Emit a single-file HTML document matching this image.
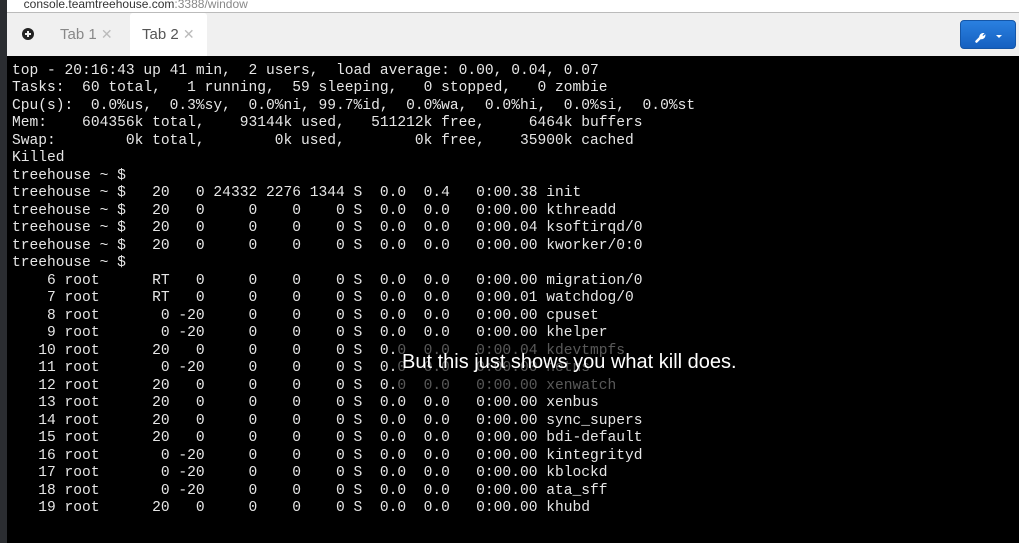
<!DOCTYPE html>
<html><head><meta charset="utf-8"><style>
*{margin:0;padding:0;box-sizing:border-box}
body{width:1019px;height:543px;overflow:hidden;background:#000;position:relative;font-family:"Liberation Sans",sans-serif}
#left{position:absolute;left:0;top:0;width:7px;height:543px;background:#2b2d31}
#url{position:absolute;left:7px;top:0;width:1012px;height:13px;background:#fff;border-bottom:1px solid #bbb;font-size:12px;color:#333;line-height:9px;overflow:hidden}
#url span{color:#888}
#tabs{position:absolute;left:7px;top:13px;width:1012px;height:43px;background:#f0f0f0}
.tab{position:absolute;top:0;height:43px;font-size:15px;color:#888;line-height:43px}
#tab2{left:123px;width:77px;background:#fff;color:#555;padding-left:12px;border-radius:3px 3px 0 0}
.x{color:#bbb;font-size:14px}
#plus{position:absolute;left:15px;top:15px;width:12px;height:12px;border-radius:50%;background:#222}
#plus:before{content:"";position:absolute;left:3px;top:5px;width:6px;height:2px;background:#f0f0f0}
#plus:after{content:"";position:absolute;left:5px;top:3px;width:2px;height:6px;background:#f0f0f0}
#btn{position:absolute;left:953px;top:7px;width:56px;height:29px;border-radius:4px;background:linear-gradient(#2a80e0,#1560c0);border:1px solid #1456a8}
#term{position:absolute;left:12px;top:63px;font-family:"Liberation Mono",monospace;font-size:14.6px;line-height:17.48px;color:#e6e6e6;white-space:pre}
#dim{position:absolute;left:398px;top:342px;width:348px;height:50px;background:rgba(0,0,0,0.62)}
#sub{position:absolute;left:402px;top:351px;font-size:20px;color:#fff;letter-spacing:0;white-space:nowrap}
</style></head><body>
<div id="left"></div>
<div id="url">&nbsp;&nbsp;&nbsp;&nbsp;&nbsp;console.teamtreehouse.com<span>:3388/window</span></div>
<div id="tabs">
<div id="plus"></div>
<div class="tab" style="left:53px">Tab 1 <span class="x">✕</span></div>
<div class="tab" id="tab2">Tab 2 <span class="x">✕</span></div>
<div id="btn"><svg width="56" height="29" viewBox="0 0 56 29"><path d="M15.5 20.5 L20 16" stroke="#fff" stroke-width="2.6" fill="none" stroke-linecap="round"/><path d="M19 17.5 a3.6 3.6 0 0 1 3.5 -5 l-1.6 1.8 1.2 1.4 1.8 -1.4 a3.6 3.6 0 0 1 -4.9 3.2z" fill="#fff" stroke="#fff" stroke-width="1"/><path d="M35 14 h6 l-3 3z" fill="#fff"/></svg></div>
</div>
<div id="term">top - 20:16:43 up 41 min,  2 users,  load average: 0.00, 0.04, 0.07
Tasks:  60 total,   1 running,  59 sleeping,   0 stopped,   0 zombie
Cpu(s):  0.0%us,  0.3%sy,  0.0%ni, 99.7%id,  0.0%wa,  0.0%hi,  0.0%si,  0.0%st
Mem:    604356k total,    93144k used,   511212k free,     6464k buffers
Swap:        0k total,        0k used,        0k free,    35900k cached
Killed
treehouse ~ $
treehouse ~ $   20   0 24332 2276 1344 S  0.0  0.4   0:00.38 init
treehouse ~ $   20   0     0    0    0 S  0.0  0.0   0:00.00 kthreadd
treehouse ~ $   20   0     0    0    0 S  0.0  0.0   0:00.04 ksoftirqd/0
treehouse ~ $   20   0     0    0    0 S  0.0  0.0   0:00.00 kworker/0:0
treehouse ~ $
    6 root      RT   0     0    0    0 S  0.0  0.0   0:00.00 migration/0
    7 root      RT   0     0    0    0 S  0.0  0.0   0:00.01 watchdog/0
    8 root       0 -20     0    0    0 S  0.0  0.0   0:00.00 cpuset
    9 root       0 -20     0    0    0 S  0.0  0.0   0:00.00 khelper
   10 root      20   0     0    0    0 S  0.0  0.0   0:00.04 kdevtmpfs
   11 root       0 -20     0    0    0 S  0.0  0.0   0:00.00 netns
   12 root      20   0     0    0    0 S  0.0  0.0   0:00.00 xenwatch
   13 root      20   0     0    0    0 S  0.0  0.0   0:00.00 xenbus
   14 root      20   0     0    0    0 S  0.0  0.0   0:00.00 sync_supers
   15 root      20   0     0    0    0 S  0.0  0.0   0:00.00 bdi-default
   16 root       0 -20     0    0    0 S  0.0  0.0   0:00.00 kintegrityd
   17 root       0 -20     0    0    0 S  0.0  0.0   0:00.00 kblockd
   18 root       0 -20     0    0    0 S  0.0  0.0   0:00.00 ata_sff
   19 root      20   0     0    0    0 S  0.0  0.0   0:00.00 khubd</div>
<div id="dim"></div>
<div id="sub">But this just shows you what kill does.</div>
</body></html>
